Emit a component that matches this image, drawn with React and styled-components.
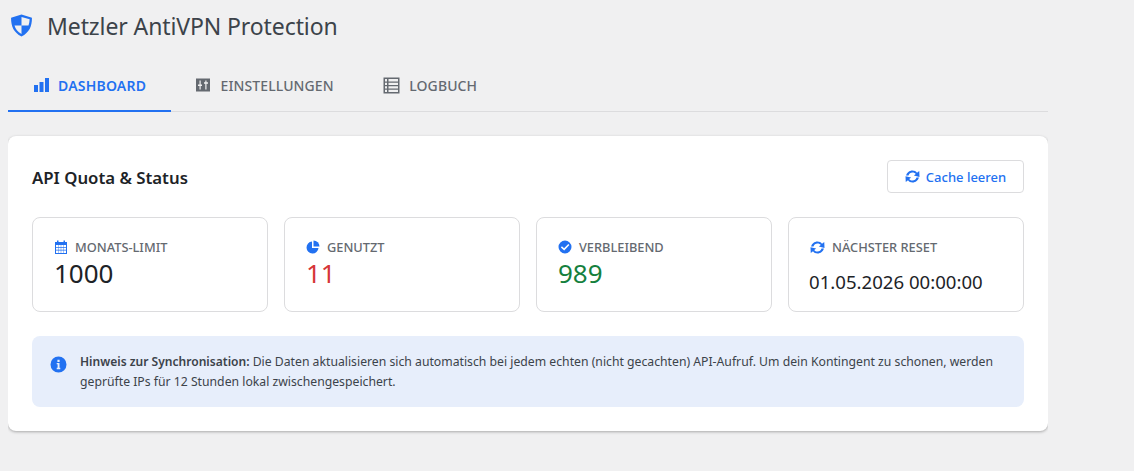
import React from 'react';
import styled, { createGlobalStyle } from 'styled-components';

const BLUE = '#2271f1';

const GlobalStyle = createGlobalStyle`
	html, body {
		margin: 0;
		padding: 0;
		background: #f0f0f1;
		font-family: "Noto Sans", "Open Sans", sans-serif;
		color: #3c434a;
	}
	* {
		box-sizing: border-box;
	}
`;

const Page = styled.div`
	width: 1040px;
	margin-left: 8px;
	height: 471px;
	overflow: hidden;
`;

const Header = styled.header`
	display: flex;
	align-items: center;
	gap: 14px;
	height: 52px;
	padding-left: 2px;
`;

const Title = styled.h1`
	margin: 0;
	font-size: 23px;
	font-weight: 400;
	letter-spacing: -0.1px;
	color: #3c434a;
`;

const Tabs = styled.nav`
	display: flex;
	height: 60px;
	padding-top: 10px;
	border-bottom: 1px solid #dcdcde;
`;

const Tab = styled.a`
	display: flex;
	align-items: center;
	gap: 9.5px;
	height: 50px;
	padding: 0 24.5px 2px;
	font-size: 14px;
	font-weight: ${(p) => (p.$active ? 600 : 500)};
	letter-spacing: ${(p) => (p.$active ? '0.2px' : '0.1px')};
	text-transform: uppercase;
	color: ${(p) => (p.$active ? BLUE : '#646970')};
	border-bottom: 2px solid ${(p) => (p.$active ? BLUE : 'transparent')};
`;

const Card = styled.section`
	margin-top: 24px;
	padding: 24px;
	background: #fff;
	border-radius: 8px;
	box-shadow: 0 1px 3px rgba(0, 0, 0, 0.3);
`;

const CardHead = styled.div`
	display: flex;
	align-items: center;
	justify-content: space-between;
	height: 33px;
	margin-bottom: 24px;
`;

const CardTitle = styled.h2`
	margin: 2px 0 0;
	font-size: 16.8px;
	font-weight: 600;
	color: #1d2327;
`;

const CacheButton = styled.button`
	display: flex;
	align-items: center;
	justify-content: center;
	gap: 6px;
	width: 137px;
	height: 33px;
	padding: 0;
	font-family: inherit;
	font-size: 13px;
	font-weight: 500;
	color: ${BLUE};
	background: #fff;
	border: 1px solid #dcdcde;
	border-radius: 4px;
`;

const StatGrid = styled.div`
	display: grid;
	grid-template-columns: repeat(4, 1fr);
	gap: 16px;
`;

const Stat = styled.div`
	height: 95px;
	padding: 19px 21px;
	border: 1px solid #dcdcde;
	border-radius: 8px;
`;

const StatLabel = styled.div`
	display: flex;
	align-items: center;
	gap: 7px;
	height: 20px;
	font-size: 12.8px;
	font-weight: 500;
	text-transform: uppercase;
	color: #646970;
`;

const StatValue = styled.div`
	margin-top: -1px;
	font-size: 26px;
	line-height: 34px;
	color: ${(p) => p.$color || '#1d2327'};
`;

const ResetValue = styled.div`
	margin: 12px 0 0 -1px;
	font-size: 18.6px;
	line-height: 26px;
	color: #1d2327;
`;

const Notice = styled.div`
	display: flex;
	gap: 13px;
	height: 71px;
	margin-top: 24px;
	padding: 16px 18px;
	background: #e7eefb;
	border-radius: 8px;
	font-size: 12.22px;
	line-height: 19.5px;
	color: #3c434a;
`;

const NoticeIcon = styled.div`
	flex: none;
	padding-top: 4px;
`;

const NoticeText = styled.p`
	margin: 0;

	strong {
		font-size: 12.06px;
		font-weight: 600;
	}
`;

const Icon = styled.svg`
	flex: none;
	display: block;
	fill: currentColor;
`;

const BlueIcon = styled(Icon)`
	color: ${BLUE};
`;

const Shield = styled(BlueIcon)`
	margin-bottom: 2px;
`;

const ShieldIcon = () => (
	<Shield width="23" height="23" viewBox="0 0 22 22">
		<path
			fillRule="evenodd"
			d="M11 0.500 L21 3.500 C21 12 18.500 17.500 11 21.500 C3.500 17.500 1 12 1 3.500 Z M11 2.800 L11 11 L17.700 11 C18.300 9.200 18.700 7.200 18.800 5 Z M11 11 L4.300 11 C5.200 14.500 7.300 17.200 11 19.200 Z"
		/>
	</Shield>
);

const BarsIcon = () => (
	<Icon width="16" height="16" viewBox="0 0 16 16">
		<rect x="1" y="8" width="4" height="7" />
		<rect x="6.500" y="5" width="4" height="10" />
		<rect x="12" y="1" width="4" height="14" />
	</Icon>
);

const SlidersIcon = () => (
	<Icon width="16" height="16" viewBox="0 0 16 16">
		<path
			fillRule="evenodd"
			d="M1 1.500h14v13H1z M4.500 3.500v4H3v1.600h1.500v3.400h1.200V9.100H7V7.500H5.700v-4z M10.300 3.500v1.700H9v1.600h1.300v5.700h1.200V6.800H13V5.200h-1.500V3.500z"
		/>
	</Icon>
);

const TableIcon = () => (
	<Icon width="17" height="17" viewBox="0 0 17 17">
		<path
			fillRule="evenodd"
			d="M0.500 0.500h16v16h-16z M2 2v2.500h2V2z M5.500 2v2.500H15V2z M2 5.700v2.300h2V5.700z M5.500 5.700v2.300H15V5.700z M2 9.200v2.300h2V9.200z M5.500 9.200v2.300H15V9.200z M2 12.700V15h2v-2.300z M5.500 12.700V15H15v-2.300z"
		/>
	</Icon>
);

const CalendarIcon = () => (
	<BlueIcon width="14" height="14" viewBox="0 0 14 14">
		<path
			fillRule="evenodd"
			d="M1 2h2V0.500h1.500V2h5V0.500H11V2h2v12H1z M2 5v2h2.200V5z M4.600 5v2h2.200V5z M7.200 5v2h2.200V5z M9.800 5v2H12V5z M2 7.700v2h2.200v-2z M4.600 7.700v2h2.200v-2z M7.200 7.700v2h2.200v-2z M9.800 7.700v2H12v-2z M2 10.400V13h2.200v-2.600z M4.600 10.400V13h2.200v-2.600z M7.200 10.400V13h2.200v-2.600z M9.800 10.400V13H12v-2.600z"
		/>
	</BlueIcon>
);

const PieIcon = () => (
	<BlueIcon width="14" height="14" viewBox="0 0 14 14">
		<path d="M6 1.500 A6 6 0 1 0 12.500 8 H6 Z" />
		<path d="M7.500 0.500 A6 6 0 0 1 13.500 6.500 H7.500 Z" />
	</BlueIcon>
);

const CheckIcon = () => (
	<BlueIcon width="14" height="14" viewBox="0 0 14 14">
		<path
			fillRule="evenodd"
			d="M7 0.500a6.500 6.500 0 1 1 0 13a6.500 6.500 0 0 1 0-13z M10.300 3.900 L6.100 8.300 L3.900 6.300 L2.900 7.400 L6.200 10.400 L11.400 5z"
		/>
	</BlueIcon>
);

const SyncIcon = () => (
	<BlueIcon width="15" height="15" viewBox="1 1 12 12">
		<path d="M7 2.200 C8.500 2.200 9.800 2.900 10.600 4 L12.400 2.600 L12.600 7.300 L8.100 6.200 L9.600 5 C9 4.200 8.100 3.800 7 3.800 C5.500 3.800 4.200 4.800 3.800 6.200 H1.900 C2.400 3.900 4.500 2.200 7 2.200 Z" />
		<path d="M7 11.800 C5.500 11.800 4.200 11.100 3.400 10 L1.600 11.400 L1.400 6.700 L5.900 7.800 L4.400 9 C5 9.800 5.900 10.200 7 10.200 C8.500 10.200 9.800 9.200 10.200 7.800 H12.100 C11.600 10.100 9.500 11.800 7 11.800 Z" />
	</BlueIcon>
);

const InfoIcon = () => (
	<BlueIcon width="17" height="17" viewBox="0 0 17 17">
		<path
			fillRule="evenodd"
			d="M8.500 0.500a8 8 0 1 1 0 16a8 8 0 0 1 0-16z M7.400 3.700v2.200h2.200V3.700z M6.700 7v1.300h.9v3.500h-.9v1.400h3.600v-1.400h-.8V7z"
		/>
	</BlueIcon>
);

export default function App() {
	return (
		<>
			<GlobalStyle />
			<Page>
				<Header>
					<ShieldIcon />
					<Title>Metzler AntiVPN Protection</Title>
				</Header>
				<Tabs>
					<Tab $active>
						<BarsIcon />
						Dashboard
					</Tab>
					<Tab>
						<SlidersIcon />
						Einstellungen
					</Tab>
					<Tab>
						<TableIcon />
						Logbuch
					</Tab>
				</Tabs>
				<Card>
					<CardHead>
						<CardTitle>API Quota &amp; Status</CardTitle>
						<CacheButton type="button">
							<SyncIcon />
							Cache leeren
						</CacheButton>
					</CardHead>
					<StatGrid>
						<Stat>
							<StatLabel>
								<CalendarIcon />
								Monats-Limit
							</StatLabel>
							<StatValue>1000</StatValue>
						</Stat>
						<Stat>
							<StatLabel>
								<PieIcon />
								Genutzt
							</StatLabel>
							<StatValue $color="#d63638">11</StatValue>
						</Stat>
						<Stat>
							<StatLabel>
								<CheckIcon />
								Verbleibend
							</StatLabel>
							<StatValue $color="#15803d">989</StatValue>
						</Stat>
						<Stat>
							<StatLabel>
								<SyncIcon />
								Nächster Reset
							</StatLabel>
							<ResetValue>01.05.2026 00:00:00</ResetValue>
						</Stat>
					</StatGrid>
					<Notice>
						<NoticeIcon>
							<InfoIcon />
						</NoticeIcon>
						<NoticeText>
							<strong>Hinweis zur Synchronisation:</strong> Die Daten aktualisieren sich automatisch bei
							jedem echten (nicht gecachten) API-Aufruf. Um dein Kontingent zu schonen, werden
							<br />
							geprüfte IPs für 12 Stunden lokal zwischengespeichert.
						</NoticeText>
					</Notice>
				</Card>
			</Page>
		</>
	);
}
